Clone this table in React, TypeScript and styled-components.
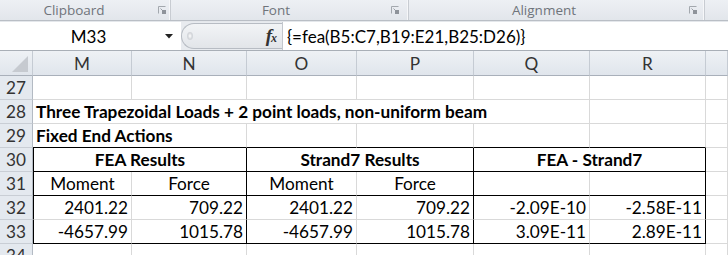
import styled, { createGlobalStyle } from "styled-components";

const GlobalStyle = createGlobalStyle`
  *, *::before, *::after {
    box-sizing: border-box;
  }
  html, body {
    margin: 0;
    padding: 0;
    background: #ffffff;
    overflow: hidden;
  }
  body {
    font-family: Lato, "Open Sans", sans-serif;
    color: #000;
  }
`;

const Window = styled.div`
  width: 728px;
  height: 255px;
  overflow: hidden;
  display: flex;
  flex-direction: column;

  & > * {
    flex-shrink: 0;
  }
`;

/* ---- ribbon group captions ---- */

const Ribbon = styled.div`
  height: 21px;
  display: grid;
  grid-template-columns: 171px 238px 296px 1fr;
  background: linear-gradient(#edf0f4, #e2e6eb);
  border-bottom: 1px solid #b9bec5;
`;

const Group = styled.div<{ $gap: number }>`
  display: flex;
  align-items: center;
  padding-right: ${(p) => p.$gap}px;
  border-right: 1px solid #c8ccd2;
  box-shadow: inset -1px 0 0 #f6f7f9;
`;

const GroupLabel = styled.span`
  flex: 1;
  text-align: center;
  padding-right: 10px;
  font-family: "Open Sans", sans-serif;
  font-size: 13.5px;
  color: #6f747b;
  line-height: 20px;
`;

const LauncherIcon = () => (
  <svg width="8" height="8" viewBox="0 0 8 8">
    <path d="M0.5 7.5 V0.5 H7.5" stroke="#a3a8ae" fill="none" />
    <path d="M2.5 2.5 L6 6" stroke="#9a9fa6" />
    <rect x="4" y="4" width="4" height="4" fill="#8e939a" />
  </svg>
);

/* ---- formula bar ---- */

const FormulaBar = styled.div`
  height: 30px;
  display: flex;
  border-top: 1px solid #e4e7eb;
  border-bottom: 1px solid #a9afb7;
  background: #e8ebef;
`;

const NameBox = styled.div`
  width: 181px;
  background: #ffffff;
  display: flex;
  align-items: center;
  font-size: 17px;
`;

const NameText = styled.span`
  flex: 1;
  text-align: center;
  padding-left: 12px;
`;

const DropArrow = styled.svg`
  margin-right: 8px;
`;

const Splitter = styled.div`
  width: 101px;
  display: flex;
  align-items: center;
  justify-content: space-between;
  background: linear-gradient(#f2f4f6, #e2e5e9);
  border: 1px solid #b7bcc3;
  border-right: none;
  border-radius: 13px 0 0 13px;
  margin: 1px 0;
  padding: 0 6px 0 5px;
`;

const Grip = styled.span`
  width: 6px;
  height: 8px;
  border-radius: 50%;
  background: radial-gradient(#ffffff, #c5c9ce);
  border: 1px solid #d3d6da;
`;

const Fx = styled.span`
  font-family: "Liberation Serif", serif;
  font-style: italic;
  font-weight: 700;
  font-size: 19px;
  color: #333;
  letter-spacing: -1px;

  small {
    font-size: 12px;
  }
`;

const FormulaInput = styled.div`
  flex: 1;
  background: #ffffff;
  border-left: 1px solid #c3c7cd;
  display: flex;
  align-items: center;
  padding-left: 4px;
  font-size: 17px;
  white-space: nowrap;
`;

/* ---- worksheet ---- */

const Sheet = styled.div`
  display: grid;
  grid-template-columns: 33px 99px 115px 110px 117px 116px 116px 22px;
  grid-template-rows: 25px;
  grid-auto-rows: 24px;
  font-size: 17.2px;
`;

const ColHead = styled.div`
  background: linear-gradient(#eef1f5, #e0e5ec);
  border-right: 1px solid #c5cbd3;
  border-bottom: 1px solid #a9b0ba;
  display: flex;
  align-items: center;
  justify-content: center;
  color: #333;
  padding-top: 1px;
`;

const Corner = styled(ColHead)`
  justify-content: flex-end;
  align-items: flex-end;
  padding: 0 4px 3px 0;
`;

const RowHead = styled.div`
  background: #e4e9ef;
  border-right: 1px solid #b3bac3;
  border-bottom: 1px solid #c9ced5;
  display: flex;
  align-items: flex-end;
  justify-content: center;
  padding-bottom: 1px;
  color: #333;
`;

type Edge = "grid" | "line";

const edge = (e?: Edge) => (e === "line" ? "#000000" : "#d9d9d9");

const Cell = styled.div<{
  $span?: number;
  $right?: Edge;
  $bottom?: Edge;
  $left?: boolean;
  $align?: "left" | "center" | "right";
  $bold?: boolean;
}>`
  grid-column: span ${(p) => p.$span ?? 1};
  border-right: 1px solid ${(p) => edge(p.$right)};
  border-bottom: 1px solid ${(p) => edge(p.$bottom)};
  border-left: ${(p) => (p.$left ? "1px solid #000000" : "none")};
  display: flex;
  align-items: flex-end;
  justify-content: ${(p) =>
    p.$align === "right" ? "flex-end" : p.$align === "center" ? "center" : "flex-start"};
  padding: 0 3px 1px 3px;
  font-weight: ${(p) => (p.$bold ? 700 : 400)};
  white-space: nowrap;
`;

const columns = ["M", "N", "O", "P", "Q", "R", ""];

const results = [
  ["2401.22", "709.22", "2401.22", "709.22", "-2.09E-10", "-2.58E-11"],
  ["-4657.99", "1015.78", "-4657.99", "1015.78", "3.09E-11", "2.89E-11"],
];

// right edge of each column M..R inside the bordered block
const blockRight: Edge[] = ["grid", "line", "grid", "line", "grid", "line"];

export default function App() {
  return (
    <Window>
      <GlobalStyle />
      <Ribbon>
        <Group $gap={4}>
          <GroupLabel>Clipboard</GroupLabel>
          <LauncherIcon />
        </Group>
        <Group $gap={9}>
          <GroupLabel>Font</GroupLabel>
          <LauncherIcon />
        </Group>
        <Group $gap={7}>
          <GroupLabel>Alignment</GroupLabel>
          <LauncherIcon />
        </Group>
        <div />
      </Ribbon>

      <FormulaBar>
        <NameBox>
          <NameText>M33</NameText>
          <DropArrow width="8" height="5" viewBox="0 0 8 5">
            <path d="M0 0 H8 L4 4.5 Z" fill="#222" />
          </DropArrow>
        </NameBox>
        <Splitter>
          <Grip />
          <Fx>
            f<small>x</small>
          </Fx>
        </Splitter>
        <FormulaInput>{"{=fea(B5:C7,B19:E21,B25:D26)}"}</FormulaInput>
      </FormulaBar>

      <Sheet>
        <Corner>
          <svg width="16" height="16" viewBox="0 0 16 16">
            <path d="M16 0 V16 H0 Z" fill="#c6cad0" />
          </svg>
        </Corner>
        {columns.map((c, i) => (
          <ColHead key={i}>{c}</ColHead>
        ))}

        {/* 27 */}
        <RowHead>27</RowHead>
        {columns.map((_, i) => (
          <Cell key={i} />
        ))}

        {/* 28 */}
        <RowHead>28</RowHead>
        <Cell $span={5} $bold>
          Three Trapezoidal Loads + 2 point loads, non-uniform beam
        </Cell>
        <Cell />
        <Cell />

        {/* 29 */}
        <RowHead>29</RowHead>
        <Cell $span={2} $bold $bottom="line">
          Fixed End Actions
        </Cell>
        <Cell $bottom="line" />
        <Cell $bottom="line" />
        <Cell $bottom="line" />
        <Cell $bottom="line" />
        <Cell />

        {/* 30 */}
        <RowHead>30</RowHead>
        <Cell $span={2} $left $right="line" $bottom="line" $align="center" $bold>
          FEA Results
        </Cell>
        <Cell $span={2} $right="line" $bottom="line" $align="center" $bold>
          Strand7 Results
        </Cell>
        <Cell $span={2} $right="line" $bottom="line" $align="center" $bold>
          FEA - Strand7
        </Cell>
        <Cell />

        {/* 31 */}
        <RowHead>31</RowHead>
        {["Moment", "Force", "Moment", "Force", "", ""].map((t, i) => (
          <Cell key={i} $left={i === 0} $right={blockRight[i]} $bottom="line" $align="center">
            {t}
          </Cell>
        ))}
        <Cell />

        {/* 32, 33 */}
        {results.map((row, r) => [
          <RowHead key={`h${r}`}>{32 + r}</RowHead>,
          ...row.map((v, i) => (
            <Cell
              key={`${r}-${i}`}
              $left={i === 0}
              $right={blockRight[i]}
              $bottom={r === results.length - 1 ? "line" : "grid"}
              $align="right"
            >
              {v}
            </Cell>
          )),
          <Cell key={`e${r}`} />,
        ])}

        {/* 34 */}
        <RowHead>34</RowHead>
        {columns.map((_, i) => (
          <Cell key={i} />
        ))}
      </Sheet>
    </Window>
  );
}
